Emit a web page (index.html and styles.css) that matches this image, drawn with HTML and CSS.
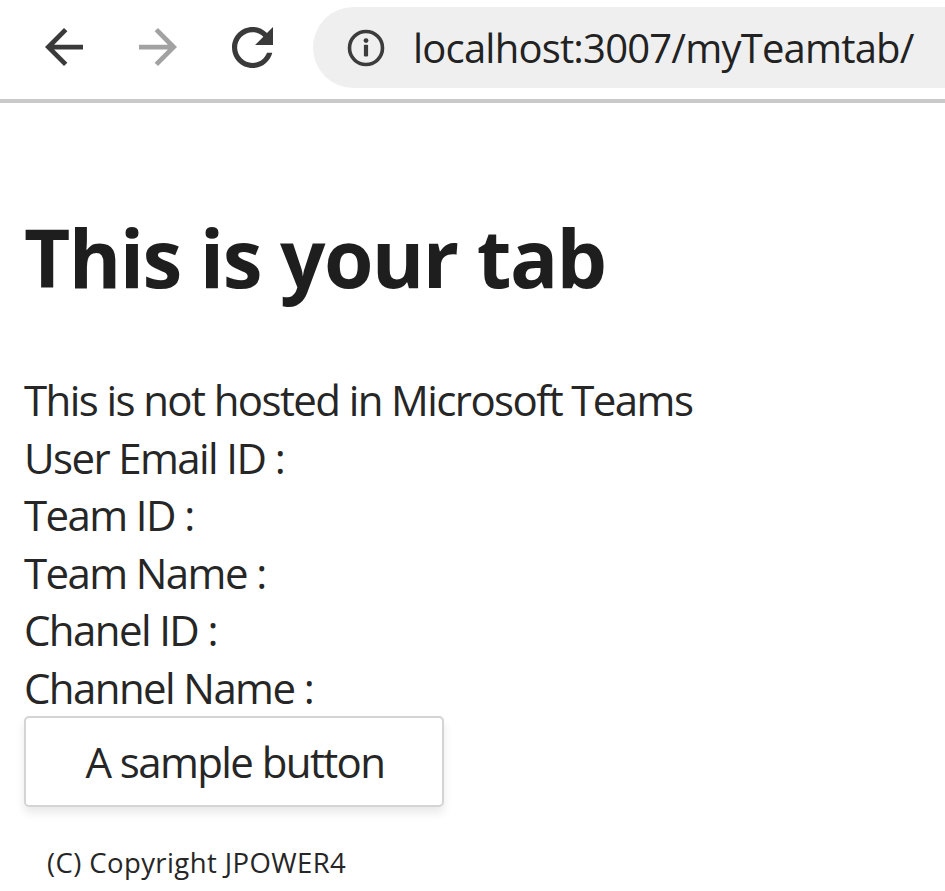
FILE: index.html
```html
<!DOCTYPE html>
<html lang="en">
<head>
<meta charset="utf-8">
<title>myTeamtab</title>
<link rel="stylesheet" href="styles.css">
</head>
<body>
<header class="toolbar">
  <div class="nav-btn">
    <svg class="icon-arrow" viewBox="4 4 16 16" aria-hidden="true"><path d="M20 11H7.83l5.59-5.59L12 4l-8 8 8 8 1.41-1.410L7.83 13H20v-2z"/></svg>
  </div>
  <div class="nav-btn nav-disabled">
    <svg class="icon-arrow" viewBox="4 4 16 16" aria-hidden="true"><path d="M4 11h12.17l-5.59-5.59L12 4l8 8-8 8-1.41-1.41L16.17 13H4v-2z"/></svg>
  </div>
  <div class="nav-btn">
    <svg class="icon-reload" viewBox="4 4 16 16" aria-hidden="true"><path d="M17.65 6.35C16.2 4.9 14.21 4 12 4c-4.42 0-7.99 3.58-7.99 8s3.57 8 7.99 8c3.73 0 6.84-2.55 7.73-6h-2.08c-.82 2.33-3.04 4-5.65 4-3.31 0-6-2.69-6-6s2.69-6 6-6c1.66 0 3.14.69 4.22 1.78L13 11h7V4l-2.35 2.35z"/></svg>
  </div>
  <div class="omnibox">
    <svg class="icon-info" viewBox="0 0 40 40" aria-hidden="true">
      <circle cx="20" cy="20" r="16.5" fill="none" stroke="#3c3c3c" stroke-width="3.6"/>
      <circle cx="20" cy="12.6" r="2.4" fill="#3c3c3c"/>
      <rect x="17.9" y="16.8" width="4.2" height="11.6" rx="0.8" fill="#3c3c3c"/>
    </svg>
    <span class="url">localhost:3007/myTeamtab/</span>
  </div>
</header>
<main class="page">
  <h1 class="title">This is your tab</h1>
  <div class="info">
    <div class="line">This is not hosted in Microsoft Teams</div>
    <div class="line">User Email ID :</div>
    <div class="line">Team ID :</div>
    <div class="line">Team Name :</div>
    <div class="line">Chanel ID :</div>
    <div class="line">Channel Name :</div>
  </div>
  <button class="sample-btn" type="button">A sample button</button>
  <footer class="copyright">(C) Copyright JPOWER4</footer>
</main>
</body>
</html>
```
FILE: styles.css
```css
html, body {
  margin: 0;
  padding: 0;
  background: #ffffff;
}
body {
  font-family: "Open Sans", "Noto Sans", "Liberation Sans", sans-serif;
  color: #262626;
}
.toolbar {
  border-bottom: 4px solid #c9c9c9;
  display: flex;
  align-items: center;
  padding-left: 17px;
  overflow: hidden;
  box-sizing: border-box;
  height: 103px;
}
.nav-btn {
  width: 94px;
  height: 60px;
  display: flex;
  align-items: center;
  justify-content: center;
  flex: none;
  margin-top: -5px;
}
.icon-arrow {
  width: 38px;
  height: 38px;
  fill: #3a3a3a;
}
.nav-disabled .icon-arrow {
  fill: #a2a2a2;
}
.icon-reload {
  width: 41px;
  height: 41px;
  fill: #3a3a3a;
}
.omnibox {
  flex: none;
  width: 760px;
  margin-left: 14px;
  height: 81px;
  margin-top: -4px;
  border-radius: 41px;
  background: #efefef;
  display: flex;
  align-items: center;
  padding-left: 33px;
  box-sizing: border-box;
}
.icon-info {
  width: 40px;
  height: 40px;
  flex: none;
}
.url {
  margin-left: 27px;
  font-size: 40px;
  color: #222222;
  letter-spacing: -0.8px;
  white-space: nowrap;
}
.page {
  padding-left: 24px;
}
.title {
  font-size: 80px;
  font-weight: 700;
  margin: 99px 0 0 0;
  line-height: 110px;
  color: #1e1e1e;
  letter-spacing: -1.6px;
}
.info {
  margin-top: 59px;
  font-size: 42px;
  line-height: 57.5px;
  letter-spacing: -1.6px;
}
.sample-btn {
  font-family: inherit;
  font-size: 42px;
  letter-spacing: -1.6px;
  color: #262626;
  background: #ffffff;
  border: 2px solid #d4d4d4;
  border-radius: 5px;
  width: 420px;
  height: 91px;
  margin-top: 0;
  padding: 0 0 0 2px;
  box-shadow: 0 6px 10px rgba(0, 0, 0, 0.09);
  display: block;
}
.copyright {
  font-size: 27.5px;
  letter-spacing: 0.4px;
  margin: 37px 0 0 23px;
  color: #262626;
}
```
